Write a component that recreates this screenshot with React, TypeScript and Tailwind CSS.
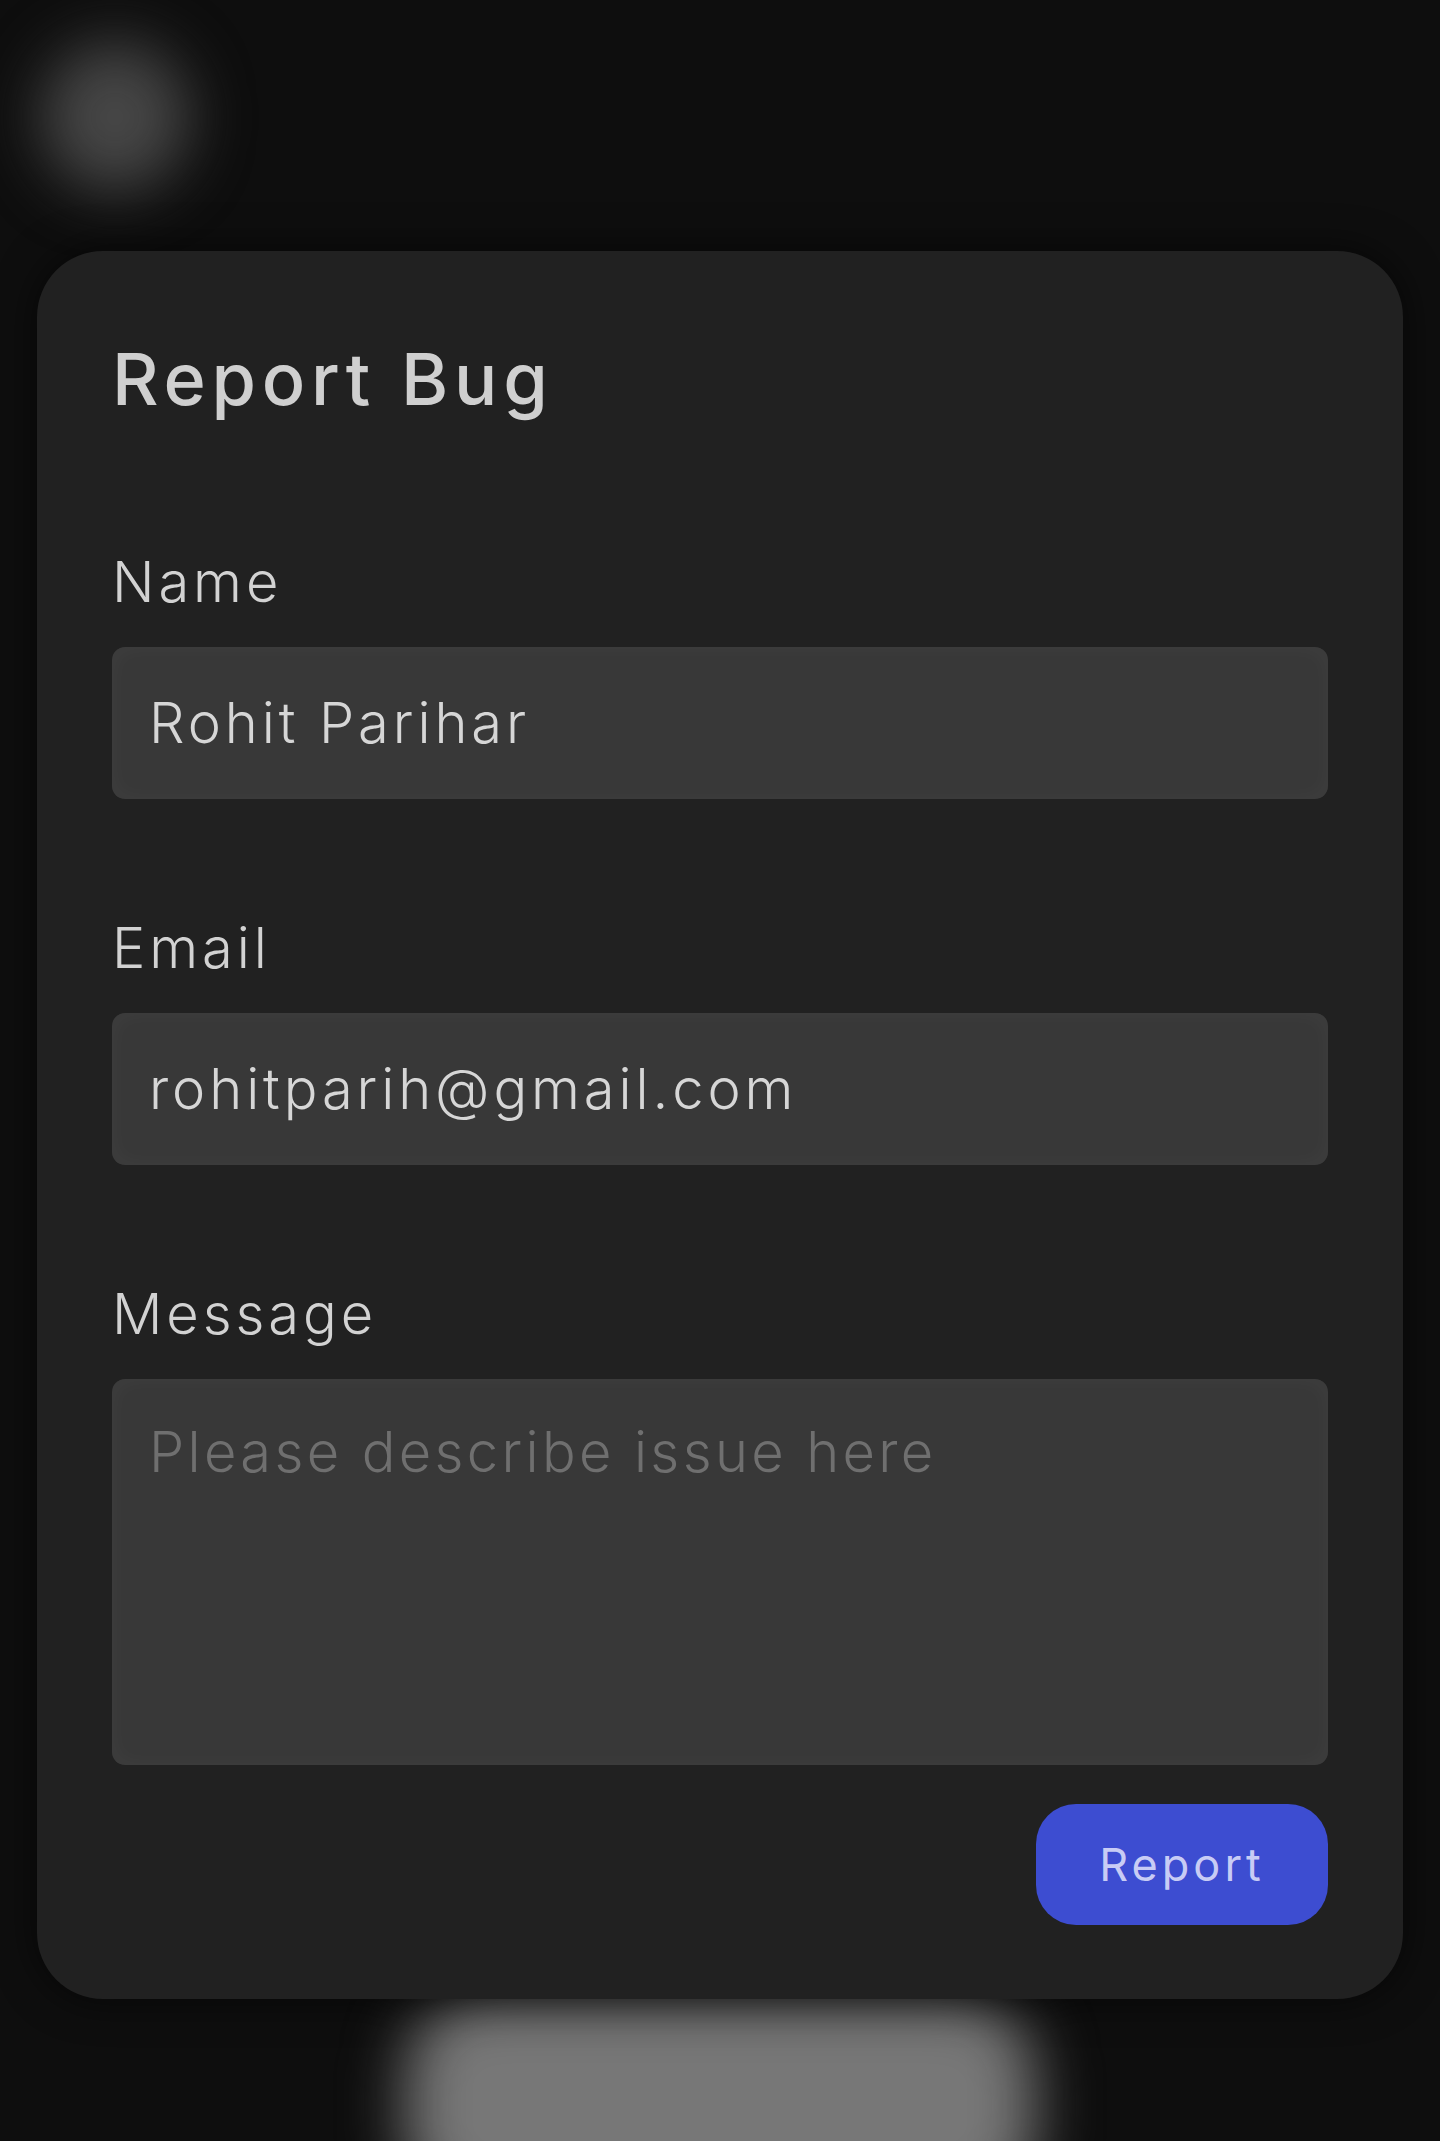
import { useState } from 'react';

const font = { fontFamily: 'Inter, "Noto Sans", sans-serif' };

function Field({ label, value, onChange }: { label: string; value: string; onChange: (v: string) => void }) {
  return (
    <div className="flex flex-col">
      <label className="text-[56px] leading-[56px] font-light tracking-[0.07em] text-[#d2d2d2] mb-[37px]">{label}</label>
      <input
        value={value}
        onChange={(e) => onChange(e.target.value)}
        className="h-[152px] w-full rounded-[13px] bg-[#383838] px-[37px] text-[56px] leading-[56px] font-light tracking-[0.07em] text-[#d6d6d6] outline-none shadow-[inset_0_0_24px_rgba(255,255,255,0.035)]"
        style={font}
      />
    </div>
  );
}

export default function App() {
  const [name, setName] = useState('Rohit Parihar');
  const [email, setEmail] = useState('rohitparih@gmail.com');
  const [message, setMessage] = useState('');

  return (
    <div className="relative min-h-[2141px] overflow-hidden bg-[#0e0e0e]" style={font}>
      {/* decorative blurred blobs */}
      <div className="absolute left-[40px] top-[42px] h-[150px] w-[150px] rounded-full bg-[#464646] blur-[30px]" />
      <div className="absolute left-[405px] top-[1995px] h-[220px] w-[630px] rounded-[80px] bg-[#777777] blur-[30px]" />

      <div className="relative mx-[37px] pt-[251px]">
        <div className="rounded-[66px] bg-[#212121] px-[75px] pt-[92px] pb-[74px] shadow-[0_0_40px_rgba(0,0,0,0.6)]">
          <h1 className="text-[72px] leading-[72px] font-medium tracking-[0.08em] text-[#cfcfcf]">Report Bug</h1>

          <div className="mt-[139px] flex flex-col gap-[121px]">
            <Field label="Name" value={name} onChange={setName} />
            <Field label="Email" value={email} onChange={setEmail} />
            <div className="flex flex-col">
              <label className="text-[56px] leading-[56px] font-light tracking-[0.07em] text-[#d2d2d2] mb-[37px]">Message</label>
              <textarea
                value={message}
                onChange={(e) => setMessage(e.target.value)}
                placeholder="Please describe issue here"
                className="h-[386px] w-full resize-none rounded-[13px] bg-[#383838] px-[37px] pt-[45px] text-[56px] leading-[56px] font-light tracking-[0.06em] text-[#d6d6d6] placeholder:text-[#6f6f6f] outline-none shadow-[inset_0_0_24px_rgba(255,255,255,0.035)]"
                style={font}
              />
            </div>
          </div>

          <div className="mt-[39px] flex justify-end">
            <button
              className="h-[121px] w-[292px] rounded-[40px] bg-[#3d4dd1] text-[45px] font-normal tracking-[0.09em] text-[#c8ccf5]"
              style={font}
            >
              Report
            </button>
          </div>
        </div>
      </div>
    </div>
  );
}
